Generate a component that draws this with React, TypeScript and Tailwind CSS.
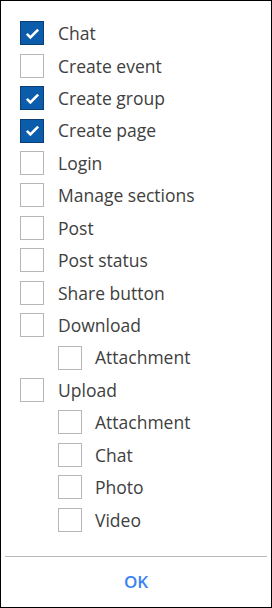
import React, { useState } from "react";

type Item = { label: string; checked?: boolean; level?: number };

const initialItems: Item[] = [
  { label: "Chat", checked: true },
  { label: "Create event" },
  { label: "Create group", checked: true },
  { label: "Create page", checked: true },
  { label: "Login" },
  { label: "Manage sections" },
  { label: "Post" },
  { label: "Post status" },
  { label: "Share button" },
  { label: "Download" },
  { label: "Attachment", level: 1 },
  { label: "Upload" },
  { label: "Attachment", level: 1 },
  { label: "Chat", level: 1 },
  { label: "Photo", level: 1 },
  { label: "Video", level: 1 },
];

const Box = ({ checked }: { checked?: boolean }) =>
  checked ? (
    <span className="flex h-6 w-6 shrink-0 items-center justify-center border border-[#0a3d73] bg-[#0b5cab]">
      <svg viewBox="0 0 24 24" className="h-[17px] w-[17px]" fill="none">
        <path
          d="M4 12.5l5 5L20 6.5"
          stroke="white"
          strokeWidth="3.6"
          strokeLinecap="butt"
          strokeLinejoin="miter"
        />
      </svg>
    </span>
  ) : (
    <span className="h-6 w-6 shrink-0 border border-[#b5b8bb] bg-white" />
  );

export default function App() {
  const [items, setItems] = useState(initialItems);

  const toggle = (i: number) =>
    setItems((prev) =>
      prev.map((it, k) => (k === i ? { ...it, checked: !it.checked } : it))
    );

  return (
    <div
      className="flex h-[608px] w-[272px] flex-col border border-black bg-white"
      style={{ fontFamily: "'Open Sans', sans-serif" }}
    >
      <div className="px-[19px] pt-[16px] pb-[20px]">
        {items.map((it, i) => (
          <div
            key={i}
            onClick={() => toggle(i)}
            className={
              "flex h-[32.45px] cursor-pointer items-center text-[17.5px] text-[#404040] " +
              (it.level ? "gap-[13px] pl-[38px]" : "gap-[14px]")
            }
          >
            <Box checked={it.checked} />
            <span>{it.label}</span>
          </div>
        ))}
      </div>
      <div className="mx-[4px] border-t border-[#b8b8b8]" />
      <div className="flex flex-1 items-center justify-center">
        <button className="text-[17px] font-semibold text-[#3b82f6]">OK</button>
      </div>
    </div>
  );
}
